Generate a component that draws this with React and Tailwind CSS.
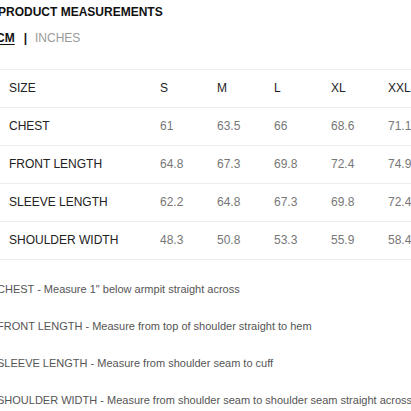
export default function App() {
  const sizes = ["S", "M", "L", "XL", "XXL"];
  const rows = [
    ["CHEST", ["61", "63.5", "66", "68.6", "71.1"]],
    ["FRONT LENGTH", ["64.8", "67.3", "69.8", "72.4", "74.9"]],
    ["SLEEVE LENGTH", ["62.2", "64.8", "67.3", "69.8", "72.4"]],
    ["SHOULDER WIDTH", ["48.3", "50.8", "53.3", "55.9", "58.4"]],
  ];
  const notes = [
    'CHEST - Measure 1" below armpit straight across',
    "FRONT LENGTH - Measure from top of shoulder straight to hem",
    "SLEEVE LENGTH - Measure from shoulder seam to cuff",
    "SHOULDER WIDTH - Measure from shoulder seam to shoulder seam straight across",
  ];
  const grid = "grid grid-cols-[151px_57px_57px_57px_57px_57px] w-[500px]";
  return (
    <div
      className="w-[411px] h-[411px] overflow-hidden bg-white"
      style={{ fontFamily: '"Liberation Sans", Arial, sans-serif' }}
    >
      <div className="pt-[4px] ml-[-2px] text-[12px] leading-[16px] font-bold text-[#111] whitespace-nowrap">
        PRODUCT MEASUREMENTS
      </div>
      <div className="mt-[10px] ml-[-4px] flex items-center text-[12px] leading-[16px] whitespace-nowrap">
        <span className="font-bold text-[#111] underline underline-offset-2">CM</span>
        <span className="font-bold text-[#111] ml-[9px] mr-[8px]">|</span>
        <span className="text-[#9a9a9a]">INCHES</span>
      </div>
      <div className="mt-[23px] border-t border-[#efefef] w-[500px]">
        <div className={`${grid} h-[38px] pb-[2px] items-center border-b border-[#ececec] text-[12px] text-[#222]`}>
          <div className="pl-[9px]">SIZE</div>
          {sizes.map((s) => (
            <div key={s} className="pl-[9px]">{s}</div>
          ))}
        </div>
        {rows.map(([label, vals]) => (
          <div
            key={label}
            className={`${grid} h-[38px] pb-[2px] items-center border-b border-[#ececec] text-[12px]`}
          >
            <div className="pl-[9px] text-[#222] whitespace-nowrap">{label}</div>
            {vals.map((v, i) => (
              <div key={i} className="pl-[9px] text-[#777]">{v}</div>
            ))}
          </div>
        ))}
      </div>
      <div className="mt-[11px] ml-[-3px] text-[11px] text-[#555] whitespace-nowrap">
        {notes.map((n) => (
          <div key={n} className="h-[37px] flex items-center">{n}</div>
        ))}
      </div>
    </div>
  );
}
